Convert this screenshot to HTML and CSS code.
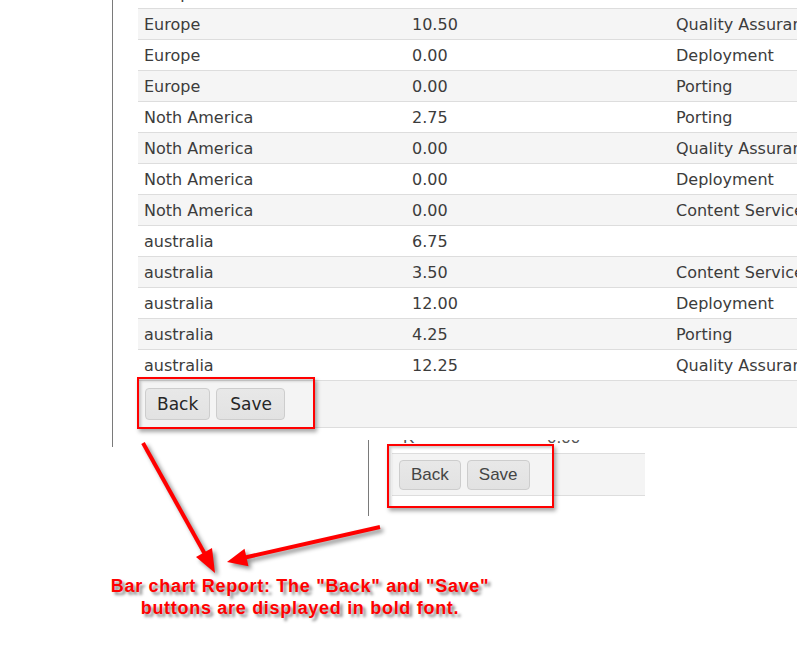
FILE: index.html
```html
<!DOCTYPE html>
<html>
<head>
<meta charset="utf-8">
<link rel="stylesheet" href="styles.css">
</head>
<body>
<div class="page">
  <section class="shot shot-a">
    <div class="grid">
      <div class="row"><span>Europe</span><span>0.00</span><span>Content Services</span></div>
      <div class="row alt"><span>Europe</span><span>10.50</span><span>Quality Assurance</span></div>
      <div class="row"><span>Europe</span><span>0.00</span><span>Deployment</span></div>
      <div class="row alt"><span>Europe</span><span>0.00</span><span>Porting</span></div>
      <div class="row"><span>Noth America</span><span>2.75</span><span>Porting</span></div>
      <div class="row alt"><span>Noth America</span><span>0.00</span><span>Quality Assurance</span></div>
      <div class="row"><span>Noth America</span><span>0.00</span><span>Deployment</span></div>
      <div class="row alt"><span>Noth America</span><span>0.00</span><span>Content Services</span></div>
      <div class="row"><span>australia</span><span>6.75</span><span></span></div>
      <div class="row alt"><span>australia</span><span>3.50</span><span>Content Services</span></div>
      <div class="row"><span>australia</span><span>12.00</span><span>Deployment</span></div>
      <div class="row alt"><span>australia</span><span>4.25</span><span>Porting</span></div>
      <div class="row"><span>australia</span><span>12.25</span><span>Quality Assurance</span></div>
      <div class="actions actions-a">
        <button class="btn btn-a">Back</button>
        <button class="btn btn-a btn-wide">Save</button>
      </div>
    </div>
  </section>

  <section class="shot shot-b">
    <div class="clip-row"><div class="clip-inner"><span>K</span><span>0.00</span></div></div>
    <div class="actions actions-b">
      <button class="btn btn-b">Back</button>
      <button class="btn btn-b">Save</button>
    </div>
  </section>

  <p class="note">Bar chart Report: The "Back" and "Save"<br>buttons are displayed in bold font.</p>

  <div class="mark mark-a"></div>
  <div class="mark mark-b"></div>

  <svg class="arrows" width="797" height="654" viewBox="0 0 797 654">
    <line x1="143" y1="443" x2="206" y2="556" stroke="#ff0000" stroke-width="4"/>
    <polygon points="215,573 196,557 212,548" fill="#ff0000"/>
    <line x1="380" y1="527" x2="243" y2="558" stroke="#ff0000" stroke-width="4"/>
    <polygon points="227,562 244.5,548.7 248.5,566.3" fill="#ff0000"/>
  </svg>
</div>
</body>
</html>
```

FILE: styles.css
```css
html, body {
  margin: 0;
  padding: 0;
  background: #fff;
  overflow: hidden;
}

.page {
  position: relative;
  width: 797px;
  height: 654px;
  overflow: hidden;
  font-family: "DejaVu Sans", Verdana, sans-serif;
}

.shot-a {
  margin-left: 112px;
  border-left: 1px solid #7a7a7a;
  height: 447px;
  padding-left: 25px;
  box-sizing: border-box;
  overflow: hidden;
}

.grid {
  margin-top: -23px;
  width: 900px;
}

.row {
  display: grid;
  grid-template-columns: 268px 264px 1fr;
  align-items: center;
  height: 30px;
  border-top: 1px solid #dddddd;
  font-size: 16px;
  color: #3c3c3c;
  white-space: nowrap;
  background: #fff;
}

.row.alt {
  background: #f5f5f5;
}

.row span {
  padding-left: 6px;
  overflow: hidden;
}

.actions {
  display: flex;
  gap: 6px;
  background: #f4f4f4;
  border-top: 1px solid #dddddd;
  border-bottom: 1px solid #dddddd;
}

.actions-a {
  padding: 7px 7px 7px;
}

.btn {
  margin: 0;
  border: 1px solid #cdcdcd;
  border-radius: 4px;
  background: linear-gradient(#e8e8e8, #e2e2e2);
  box-sizing: border-box;
}

.btn-a {
  height: 32px;
  padding: 0 11px;
  font-family: "DejaVu Sans", Verdana, sans-serif;
  font-size: 17px;
  color: #262626;
}

.btn-wide {
  padding: 0 12px 0 13px;
}

.shot-b {
  margin-left: 368px;
  margin-top: -7px;
  height: 76px;
  border-left: 1px solid #7a7a7a;
  padding-left: 23px;
  box-sizing: border-box;
  overflow: hidden;
  font-family: "Liberation Sans", Arial, sans-serif;
}

.clip-row {
  height: 13px;
  width: 253px;
  overflow: hidden;
}

.clip-inner {
  display: grid;
  grid-template-columns: 144px 1fr;
  margin-top: -12px;
  line-height: 20px;
  font-size: 17px;
  color: #555;
}

.clip-inner span {
  padding-left: 11px;
}

.actions-b {
  width: 253px;
  box-sizing: border-box;
  padding: 6px 7px 5px;
}

.btn-b {
  height: 30px;
  padding: 0 11px;
  font-family: "Liberation Sans", Arial, sans-serif;
  font-size: 17px;
  color: #444;
}

.note {
  margin: 59px 0 0;
  width: 600px;
  text-align: center;
  font-family: "Liberation Sans", Arial, sans-serif;
  font-weight: bold;
  font-size: 18px;
  letter-spacing: 0.7px;
  line-height: 22px;
  color: #ff0000;
  text-shadow: 3px 3px 3px rgba(0, 0, 0, 0.45);
}

.mark {
  position: absolute;
  border: 2px solid #ff0000;
  box-sizing: border-box;
  box-shadow: 2px 3px 4px rgba(0, 0, 0, 0.35), inset 2px 2px 3px rgba(0, 0, 0, 0.2);
}

.mark-a {
  left: 137px;
  top: 377px;
  width: 178px;
  height: 52px;
}

.mark-b {
  left: 387px;
  top: 444px;
  width: 167px;
  height: 64px;
}

.arrows {
  position: absolute;
  left: 0;
  top: 0;
  pointer-events: none;
  filter: drop-shadow(3px 3px 2px rgba(0, 0, 0, 0.45));
}
```
